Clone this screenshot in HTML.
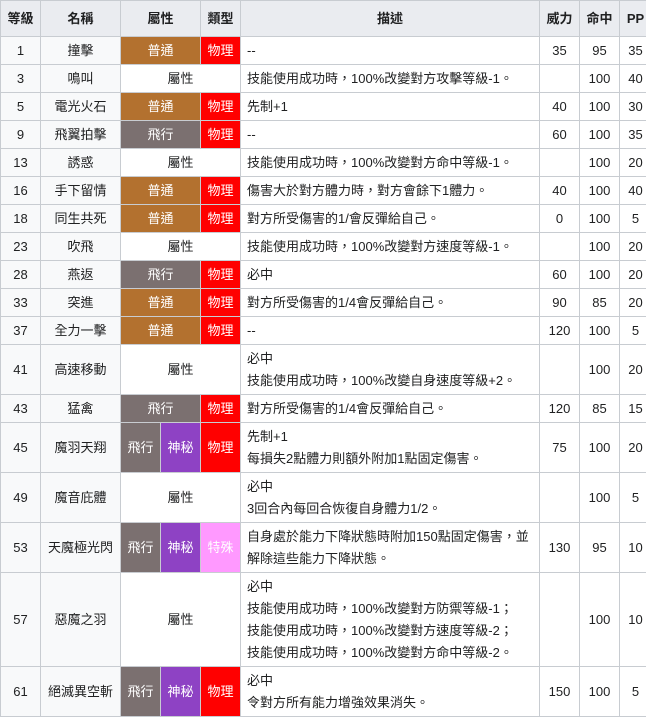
<!DOCTYPE html>
<html><head><meta charset="utf-8"><style>
body{margin:0;background:#fff;font-family:"Liberation Sans","Noto Sans CJK TC",sans-serif;font-size:13px;color:#202122;overflow:hidden}
table{border-collapse:collapse;table-layout:fixed;width:651px}
td,th{border:1px solid #c8ccd1;padding:0 6px;text-align:center;line-height:22px;overflow:hidden;white-space:nowrap}
td:last-child,th:last-child{padding:0 2px}
th{background:#eaecf0;font-weight:bold;height:35px}
td.l,td.n{background:#f8f9fa}
td.d{text-align:left;white-space:normal}
.nm{background:#b3712f;color:#fff}
.fl{background:#7b7070;color:#fff}
.my{background:#8e42c4;color:#fff}
.ph{background:#ff0000;color:#fff}
.sp{background:#ff99ff;color:#fff}
tr.s td{height:27px}
tr.t td{height:49px}
tr.q td{height:93px}
</style></head><body>
<table>
<colgroup><col style="width:40px"><col style="width:80px"><col style="width:40px"><col style="width:40px"><col style="width:40px"><col style="width:299px"><col style="width:40px"><col style="width:40px"><col style="width:32px"></colgroup>
<tr><th>等級</th><th>名稱</th><th colspan="2">屬性</th><th>類型</th><th>描述</th><th>威力</th><th>命中</th><th>PP</th></tr>
</table>
<table style="margin-top:-1px">
<colgroup><col style="width:40px"><col style="width:80px"><col style="width:40px"><col style="width:40px"><col style="width:40px"><col style="width:299px"><col style="width:40px"><col style="width:40px"><col style="width:32px"></colgroup>
<tr class="s"><td class="l">1</td><td class="n">撞擊</td><td class="nm" colspan="2">普通</td><td class="ph">物理</td><td class="d">--</td><td>35</td><td>95</td><td>35</td></tr>
<tr class="s"><td class="l">3</td><td class="n">鳴叫</td><td colspan="3">屬性</td><td class="d">技能使用成功時，100%改變對方攻擊等級-1。</td><td></td><td>100</td><td>40</td></tr>
<tr class="s"><td class="l">5</td><td class="n">電光火石</td><td class="nm" colspan="2">普通</td><td class="ph">物理</td><td class="d">先制+1</td><td>40</td><td>100</td><td>30</td></tr>
<tr class="s"><td class="l">9</td><td class="n">飛翼拍擊</td><td class="fl" colspan="2">飛行</td><td class="ph">物理</td><td class="d">--</td><td>60</td><td>100</td><td>35</td></tr>
<tr class="s"><td class="l">13</td><td class="n">誘惑</td><td colspan="3">屬性</td><td class="d">技能使用成功時，100%改變對方命中等級-1。</td><td></td><td>100</td><td>20</td></tr>
<tr class="s"><td class="l">16</td><td class="n">手下留情</td><td class="nm" colspan="2">普通</td><td class="ph">物理</td><td class="d">傷害大於對方體力時，對方會餘下1體力。</td><td>40</td><td>100</td><td>40</td></tr>
<tr class="s"><td class="l">18</td><td class="n">同生共死</td><td class="nm" colspan="2">普通</td><td class="ph">物理</td><td class="d">對方所受傷害的1/會反彈給自己。</td><td>0</td><td>100</td><td>5</td></tr>
<tr class="s"><td class="l">23</td><td class="n">吹飛</td><td colspan="3">屬性</td><td class="d">技能使用成功時，100%改變對方速度等級-1。</td><td></td><td>100</td><td>20</td></tr>
<tr class="s"><td class="l">28</td><td class="n">燕返</td><td class="fl" colspan="2">飛行</td><td class="ph">物理</td><td class="d">必中</td><td>60</td><td>100</td><td>20</td></tr>
<tr class="s"><td class="l">33</td><td class="n">突進</td><td class="nm" colspan="2">普通</td><td class="ph">物理</td><td class="d">對方所受傷害的1/4會反彈給自己。</td><td>90</td><td>85</td><td>20</td></tr>
<tr class="s"><td class="l">37</td><td class="n">全力一擊</td><td class="nm" colspan="2">普通</td><td class="ph">物理</td><td class="d">--</td><td>120</td><td>100</td><td>5</td></tr>
<tr class="t"><td class="l">41</td><td class="n">高速移動</td><td colspan="3">屬性</td><td class="d">必中<br>技能使用成功時，100%改變自身速度等級+2。</td><td></td><td>100</td><td>20</td></tr>
<tr class="s"><td class="l">43</td><td class="n">猛禽</td><td class="fl" colspan="2">飛行</td><td class="ph">物理</td><td class="d">對方所受傷害的1/4會反彈給自己。</td><td>120</td><td>85</td><td>15</td></tr>
<tr class="t"><td class="l">45</td><td class="n">魔羽天翔</td><td class="fl">飛行</td><td class="my">神秘</td><td class="ph">物理</td><td class="d">先制+1<br>每損失2點體力則額外附加1點固定傷害。</td><td>75</td><td>100</td><td>20</td></tr>
<tr class="t"><td class="l">49</td><td class="n">魔音庇體</td><td colspan="3">屬性</td><td class="d">必中<br>3回合內每回合恢復自身體力1/2。</td><td></td><td>100</td><td>5</td></tr>
<tr class="t"><td class="l">53</td><td class="n">天魔極光閃</td><td class="fl">飛行</td><td class="my">神秘</td><td class="sp">特殊</td><td class="d">自身處於能力下降狀態時附加150點固定傷害，並解除這些能力下降狀態。</td><td>130</td><td>95</td><td>10</td></tr>
<tr class="q"><td class="l">57</td><td class="n">惡魔之羽</td><td colspan="3">屬性</td><td class="d">必中<br>技能使用成功時，100%改變對方防禦等級-1；<br>技能使用成功時，100%改變對方速度等級-2；<br>技能使用成功時，100%改變對方命中等級-2。</td><td></td><td>100</td><td>10</td></tr>
<tr class="t"><td class="l">61</td><td class="n">絕滅異空斬</td><td class="fl">飛行</td><td class="my">神秘</td><td class="ph">物理</td><td class="d">必中<br>令對方所有能力增強效果消失。</td><td>150</td><td>100</td><td>5</td></tr>
</table>
</body></html>
